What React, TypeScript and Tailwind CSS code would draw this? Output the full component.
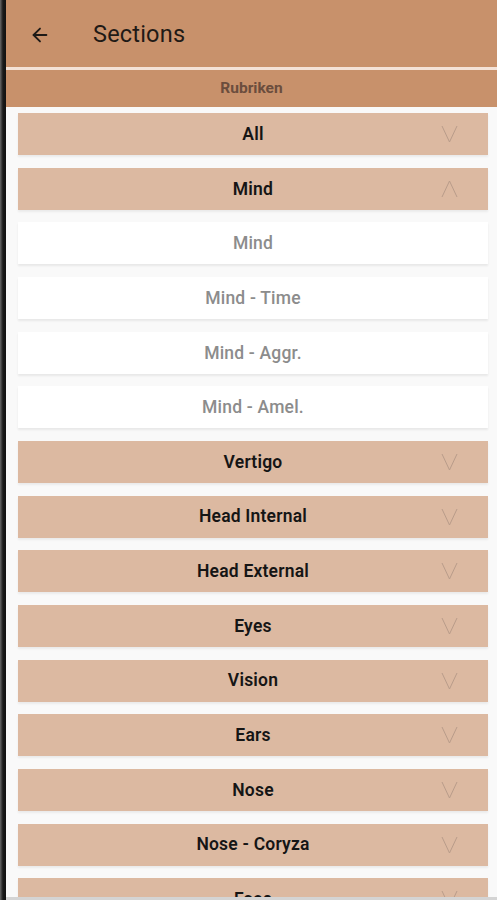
import { ArrowLeft } from "lucide-react";

const sections = [
  "All",
  "Mind",
  "Vertigo",
  "Head Internal",
  "Head External",
  "Eyes",
  "Vision",
  "Ears",
  "Nose",
  "Nose - Coryza",
  "Face",
];

const mindItems = ["Mind", "Mind - Time", "Mind - Aggr.", "Mind - Amel."];

function Chevron({ up }: { up?: boolean }) {
  return (
    <svg width="17" height="18" viewBox="0 0 17 18" className="absolute right-[30px] top-1/2 -translate-y-1/2">
      <polyline
        points={up ? "1,17 8.5,1 16,17" : "1,1 8.5,17 16,1"}
        fill="none"
        stroke="#b99c8a"
        strokeWidth="1"
      />
    </svg>
  );
}

function SectionRow({ title, open }: { title: string; open?: boolean }) {
  return (
    <div className="relative h-[42px] shrink-0 bg-[#dcb9a1] shadow-[0_2px_2px_rgba(0,0,0,0.06)] flex items-center justify-center">
      <span className="text-[17.5px] font-semibold text-[#151515] tracking-[0.2px]">{title}</span>
      <Chevron up={open} />
    </div>
  );
}

function SubRow({ title }: { title: string }) {
  return (
    <div className="h-[42px] shrink-0 bg-white shadow-[0_2px_2px_rgba(0,0,0,0.07)] flex items-center justify-center">
      <span className="text-[17.5px] font-medium text-[#8c8c8c] tracking-[0.2px]">{title}</span>
    </div>
  );
}

export default function App() {
  return (
    <div
      className="h-[900px] w-[497px] overflow-hidden flex bg-white"
      style={{ fontFamily: "Roboto, 'Noto Sans', sans-serif" }}
    >
      {/* device frame edge */}
      <div className="w-[6px] shrink-0 bg-gradient-to-r from-[#6a6a6a] via-[#1a1a1a] to-[#111]" />

      <div className="flex-1 flex flex-col min-w-0">
        {/* app bar */}
        <div className="h-[67px] shrink-0 bg-[#c8916b] flex items-center pt-[3px]">
          <ArrowLeft size={22} strokeWidth={2} className="ml-[23px] text-[#1e1a17]" />
          <span className="ml-[42px] text-[23.5px] text-[#1f1a16] font-normal tracking-[0.2px]">Sections</span>
        </div>
        <div className="h-[3px] shrink-0 bg-[#f4e2d7]" />
        <div className="h-[37px] shrink-0 bg-[#c8916b] flex items-center justify-center">
          <span className="text-[15.5px] font-bold text-[#6b4d3d]">Rubriken</span>
        </div>

        {/* list */}
        <div className="flex-1 min-h-0 overflow-hidden bg-[#f9f9f9] relative">
          <div className="flex flex-col gap-[12.67px] pt-[6px] pl-[12px] pr-[9px]">
            <SectionRow title={sections[0]} />
            <SectionRow title={sections[1]} open />
            {mindItems.map((m) => (
              <SubRow key={m} title={m} />
            ))}
            {sections.slice(2).map((s) => (
              <SectionRow key={s} title={s} />
            ))}
          </div>
          <div className="absolute bottom-0 left-0 right-0 h-[3px] bg-[#d4d4d4]" />
        </div>
      </div>
    </div>
  );
}
